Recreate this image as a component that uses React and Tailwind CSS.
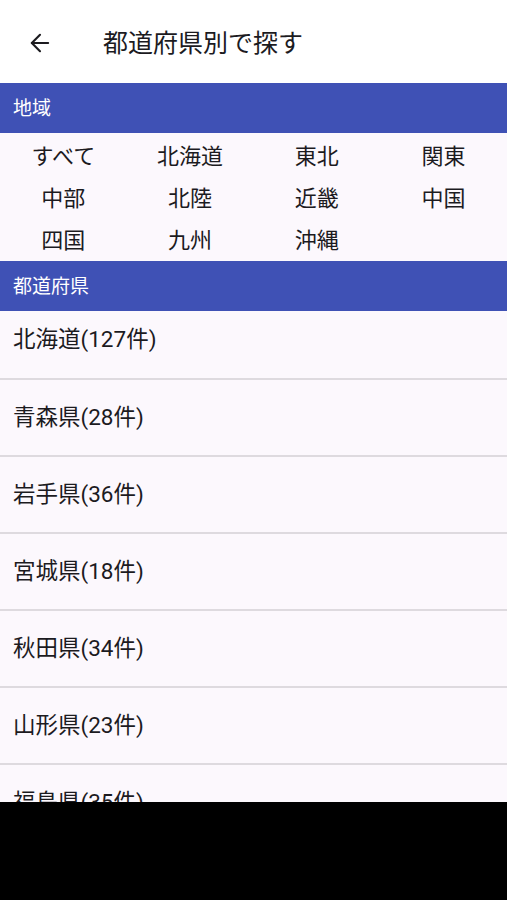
import { ArrowLeft } from "lucide-react";

const regions = [
  "すべて", "北海道", "東北", "関東",
  "中部", "北陸", "近畿", "中国",
  "四国", "九州", "沖縄",
];

const prefectures = [
  { name: "北海道", count: 127 },
  { name: "青森県", count: 28 },
  { name: "岩手県", count: 36 },
  { name: "宮城県", count: 18 },
  { name: "秋田県", count: 34 },
  { name: "山形県", count: 23 },
  { name: "福島県", count: 35 },
  { name: "茨城県", count: 41 },
];

const font = "font-['Roboto','Noto_Sans_CJK_JP',sans-serif]";

const App = () => {
  return (
    <div className={`flex flex-col h-[900px] w-[507px] overflow-hidden bg-[#fcf8fd] text-[#1c1b1f] ${font}`}>
      {/* App bar */}
      <header className="flex items-center h-[83px] shrink-0 bg-white pt-[3px]">
        <div className="w-[103px] flex items-center pl-[26px]">
          <ArrowLeft size={28} strokeWidth={1.8} className="text-[#1c1b1f]" />
        </div>
        <h1 className="text-[25px] leading-none">都道府県別で探す</h1>
      </header>

      <div className="flex-1 overflow-hidden">
        {/* Region section */}
        <SectionHeader label="地域" />
        <div className="grid grid-cols-4 pt-[2px]">
          {regions.map((r) => (
            <div key={r} className="h-[42px] flex items-center justify-center text-[22px]">
              {r}
            </div>
          ))}
        </div>

        {/* Prefecture list */}
        <SectionHeader label="都道府県" />
        <ul>
          {prefectures.map((p, i) => (
            <li
              key={p.name}
              className={`flex items-center px-[13px] text-[22.5px] border-b-2 border-[#dedadf] ${
                i === 0 ? "h-[69px] pb-[10px]" : "h-[77px]"
              }`}
            >
              {p.name}({p.count}件)
            </li>
          ))}
        </ul>
      </div>

      {/* System nav area */}
      <div className="h-[98px] shrink-0 bg-black" />
    </div>
  );
};

const SectionHeader = ({ label }) => (
  <div className="h-[50px] flex items-center px-[13px] pt-[3px] bg-[#3f51b5] text-white text-[19px]">
    {label}
  </div>
);

export default App;
